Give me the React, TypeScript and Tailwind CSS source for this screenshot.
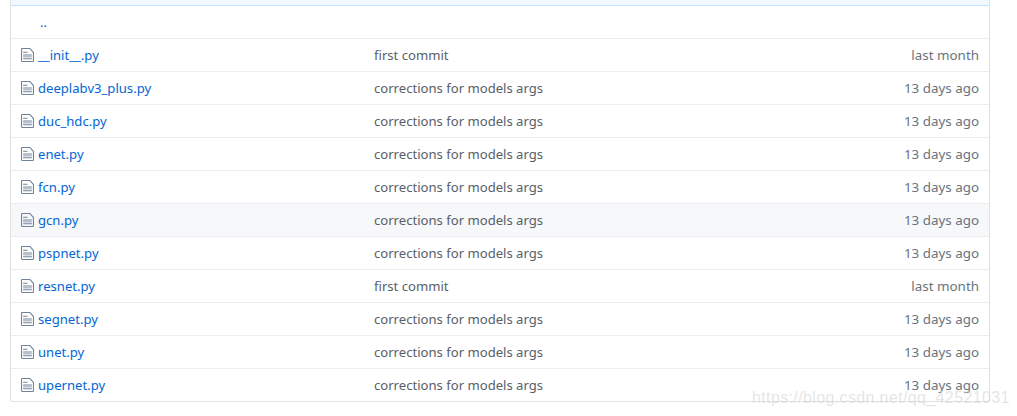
const rows = [
  ["__init__.py", "first commit", "last month"],
  ["deeplabv3_plus.py", "corrections for models args", "13 days ago"],
  ["duc_hdc.py", "corrections for models args", "13 days ago"],
  ["enet.py", "corrections for models args", "13 days ago"],
  ["fcn.py", "corrections for models args", "13 days ago"],
  ["gcn.py", "corrections for models args", "13 days ago"],
  ["pspnet.py", "corrections for models args", "13 days ago"],
  ["resnet.py", "first commit", "last month"],
  ["segnet.py", "corrections for models args", "13 days ago"],
  ["unet.py", "corrections for models args", "13 days ago"],
  ["upernet.py", "corrections for models args", "13 days ago"],
];

function FileIcon() {
  return (
    <svg width="13" height="14" viewBox="0 0 12 15" className="shrink-0" fill="#71839a" preserveAspectRatio="none">
      <path fillRule="evenodd" d="M6 5H2V4h4v1zM2 8h8V7H2v1zm0 2h8V9H2v1zm0 2h8v-1H2v1zm10-7.5V14c0 .55-.45 1-1 1H1c-.55 0-1-.45-1-1V1c0-.55.45-1 1-1h7.5L12 4.5zM11 5L8 1H1v13h10V5z" />
    </svg>
  );
}

export default function App() {
  return (
    <div className="relative w-[1017px] h-[416px] overflow-hidden bg-white font-['Noto_Sans','Open_Sans',sans-serif] text-[13.1px]">
      <div className="ml-[10px] w-[980px] h-[402px] border-x border-b border-[#dfe2e5] rounded-b-[3px] overflow-hidden">
        <div className="h-[6px] bg-[#f1f8ff] border-b border-[#c8e1ff]" />
        <div className="h-[32px] pl-[29px] pt-[1px] flex items-center text-[#0366d6]">..</div>
        {rows.map(([name, msg, age]) => (
          <div
            key={name}
            className={`h-[33px] flex items-center border-t border-[#eaecef] pt-[1px] pl-[10px] pr-[10px] ${name === "gcn.py" ? "bg-[#f6f8fa]" : ""}`}
          >
            <div className="w-[353px] flex items-center gap-[4px] shrink-0">
              <FileIcon />
              <span className="text-[#0366d6]">{name}</span>
            </div>
            <span className="flex-1 text-[#586069]">{msg}</span>
            <span className="text-[#6a737d] text-[13.4px]">{age}</span>
          </div>
        ))}
      </div>
      <div className="absolute left-[752px] top-[388px] text-[16px] leading-[20px] tracking-[0.37px] text-[#d4d4d4]/60 font-['Liberation_Sans',sans-serif] whitespace-nowrap">
        https://blog.csdn.net/qq_42521031
      </div>
    </div>
  );
}
